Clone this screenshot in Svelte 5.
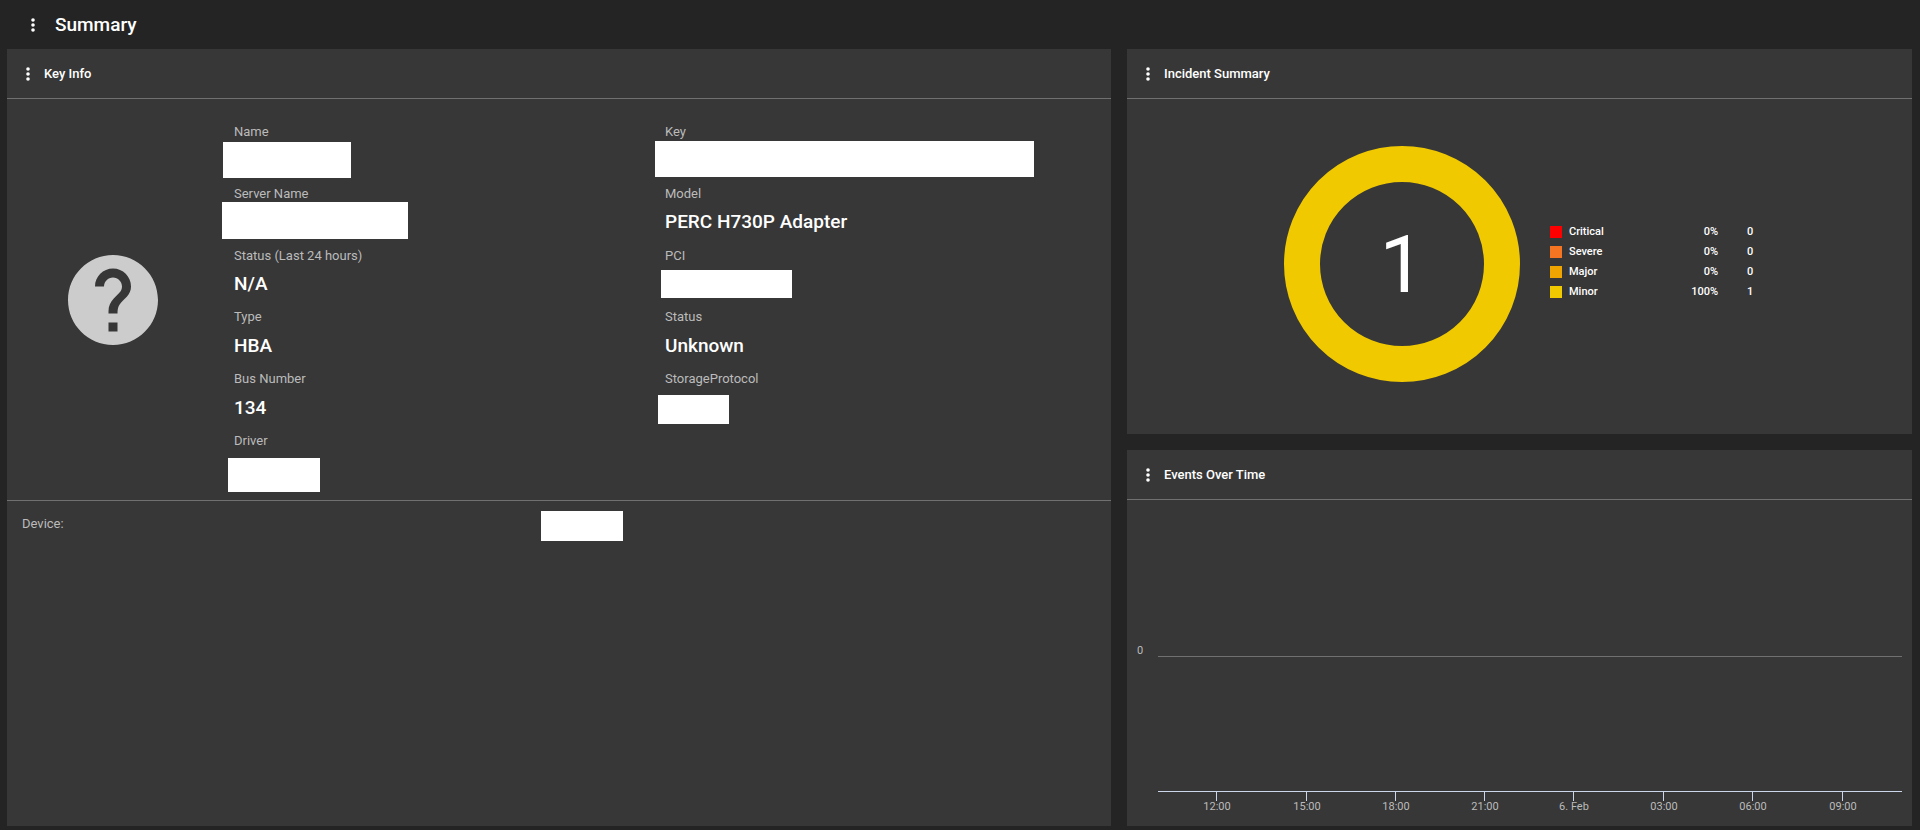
<script>
	// Left block of Key Info, offsets of the redaction boxes are relative to each field
	const leftFields = [
		{ label: 'Name', mask: { x: -11, y: 18, w: 128, h: 36 } },
		{ label: 'Server Name', mask: { x: -12, y: 16, w: 186, h: 37 } },
		{ label: 'Status (Last 24 hours)', value: 'N/A' },
		{ label: 'Type', value: 'HBA' },
		{ label: 'Bus Number', value: '134' },
		{ label: 'Driver', mask: { x: -6, y: 25, w: 92, h: 34 } }
	];

	const rightFields = [
		{ label: 'Key', mask: { x: -10, y: 17, w: 379, h: 36 } },
		{ label: 'Model', value: 'PERC H730P Adapter' },
		{ label: 'PCI', mask: { x: -4, y: 22, w: 131, h: 28 } },
		{ label: 'Status', value: 'Unknown' },
		{ label: 'StorageProtocol', mask: { x: -7, y: 24, w: 71, h: 29 } }
	];

	const severities = [
		{ name: 'Critical', color: '#ff0000', pct: '0%', count: 0 },
		{ name: 'Severe', color: '#f57523', pct: '0%', count: 0 },
		{ name: 'Major', color: '#f0a400', pct: '0%', count: 0 },
		{ name: 'Minor', color: '#f0c900', pct: '100%', count: 1 }
	];

	const ticks = [
		{ x: 89, label: '12:00' },
		{ x: 179, label: '15:00' },
		{ x: 268, label: '18:00' },
		{ x: 357, label: '21:00' },
		{ x: 446, label: '6. Feb' },
		{ x: 536, label: '03:00' },
		{ x: 625, label: '06:00' },
		{ x: 715, label: '09:00' }
	];
</script>

{#snippet dots()}
	<svg class="dots" width="6" height="14" viewBox="0 0 6 14" aria-hidden="true">
		<circle cx="3" cy="2" r="1.8" />
		<circle cx="3" cy="7" r="1.8" />
		<circle cx="3" cy="12" r="1.8" />
	</svg>
{/snippet}

{#snippet field(f)}
	<div class="field">
		<div class="label">{f.label}</div>
		{#if f.value}
			<div class="value">{f.value}</div>
		{:else}
			<div class="mask" style="left: {f.mask.x}px; top: {f.mask.y}px; width: {f.mask.w}px; height: {f.mask.h}px;"></div>
		{/if}
	</div>
{/snippet}

<div class="page">
	<header class="topbar">
		{@render dots()}
		<h1>Summary</h1>
	</header>

	<div class="grid">
		<section class="panel">
			<div class="panel-head">
				{@render dots()}
				<h2>Key Info</h2>
			</div>

			<div class="info">
				<div class="status-icon">
					<svg width="90" height="90" viewBox="2 2 20 20" aria-hidden="true">
						<path fill="#cccccc" d="M12 2C6.48 2 2 6.48 2 12s4.48 10 10 10 10-4.48 10-10S17.52 2 12 2zm1 17h-2v-2h2v2zm2.07-7.75l-.9.92C13.45 12.9 13 13.5 13 15h-2v-.5c0-1.1.45-2.1 1.17-2.83l1.24-1.26c.37-.36.59-.86.59-1.41 0-1.1-.9-2-2-2s-2 .9-2 2H8c0-2.21 1.79-4 4-4s4 1.79 4 4c0 .88-.36 1.68-.93 2.25z" />
					</svg>
				</div>
				<div class="column">
					{#each leftFields as f}
						{@render field(f)}
					{/each}
				</div>
				<div class="column">
					{#each rightFields as f}
						{@render field(f)}
					{/each}
				</div>
			</div>

			<div class="device">
				<span class="device-label">Device:</span>
				<div class="device-mask"></div>
			</div>
		</section>

		<div class="side">
			<section class="panel incidents">
				<div class="panel-head">
					{@render dots()}
					<h2>Incident Summary</h2>
				</div>
				<div class="incident-body">
					<svg class="donut" width="236" height="236" viewBox="0 0 236 236">
						<circle cx="118" cy="118" r="100" fill="none" stroke="#f0c900" stroke-width="36" />
						<text x="118" y="146" text-anchor="middle">1</text>
					</svg>
					<div class="legend">
						{#each severities as s}
							<span class="swatch" style="background: {s.color};"></span>
							<span class="sev-name">{s.name}</span>
							<span class="sev-pct">{s.pct}</span>
							<span class="sev-count">{s.count}</span>
						{/each}
					</div>
				</div>
			</section>

			<section class="panel events">
				<div class="panel-head">
					{@render dots()}
					<h2>Events Over Time</h2>
				</div>
				<svg class="chart" width="785" height="326" viewBox="0 0 785 326">
					<text class="y-label" x="10" y="154">0</text>
					<line x1="31" x2="775" y1="156.5" y2="156.5" stroke="#707070" />
					<line x1="31" x2="775" y1="291.5" y2="291.5" stroke="#ccd6eb" />
					{#each ticks as t}
						<line x1={t.x + 0.5} x2={t.x + 0.5} y1="292" y2="301" stroke="#ccd6eb" />
						<text class="x-label" x={t.x + 1} y="310" text-anchor="middle">{t.label}</text>
					{/each}
				</svg>
			</section>
		</div>
	</div>
</div>

<style>
	:global(body) {
		margin: 0;
		background: #242424;
	}

	.page {
		width: 1920px;
		height: 830px;
		overflow: hidden;
		display: flex;
		flex-direction: column;
		background: #242424;
		color: #fff;
		font-family: Roboto, "Liberation Sans", sans-serif;
	}

	.topbar {
		height: 49px;
		flex: none;
		display: flex;
		align-items: center;
		gap: 19px;
		padding-left: 30px;
		box-sizing: border-box;
	}

	.topbar h1 {
		margin: 0;
		font-size: 19px;
		font-weight: 500;
	}

	.dots {
		flex: none;
		fill: #fff;
	}

	.grid {
		flex: 1;
		display: grid;
		grid-template-columns: 1104px 785px;
		column-gap: 16px;
		padding: 0 8px 4px 7px;
		min-height: 0;
	}

	.panel {
		background: #373737;
		display: flex;
		flex-direction: column;
	}

	.panel-head {
		height: 50px;
		flex: none;
		box-sizing: border-box;
		display: flex;
		align-items: center;
		gap: 13px;
		padding-left: 18px;
		border-bottom: 1px solid #707070;
	}

	.panel-head h2 {
		margin: 0;
		font-size: 13px;
		font-weight: 500;
	}

	.info {
		height: 402px;
		flex: none;
		box-sizing: border-box;
		display: flex;
		border-bottom: 1px solid #707070;
	}

	.status-icon {
		width: 212px;
		flex: none;
		margin-right: 15px;
		display: flex;
		align-items: center;
		justify-content: center;
	}

	.column {
		width: 431px;
		flex: none;
		box-sizing: border-box;
		padding-top: 25px;
		display: flex;
		flex-direction: column;
		gap: 14.8px;
	}

	.field {
		position: relative;
		height: 47px;
	}

	.label {
		font-size: 13px;
		line-height: 16px;
		color: #bbbbbb;
	}

	.value {
		margin-top: 8.4px;
		font-size: 19px;
		line-height: 24px;
		font-weight: 500;
		color: #fff;
	}

	.mask {
		position: absolute;
		background: #fff;
	}

	.device {
		display: flex;
		align-items: flex-start;
		padding: 10px 15px;
	}

	.device-label {
		width: 519px;
		margin-top: 5px;
		font-size: 13px;
		line-height: 16px;
		color: #bbbbbb;
	}

	.device-mask {
		width: 82px;
		height: 30px;
		background: #fff;
	}

	.side {
		display: flex;
		flex-direction: column;
		gap: 16px;
		min-height: 0;
	}

	.incidents {
		height: 385px;
	}

	.events {
		flex: 1;
	}

	.incident-body {
		flex: 1;
		display: flex;
		align-items: center;
		padding: 0 0 5px 157px;
	}

	.donut {
		flex: none;
	}

	.donut text {
		font-size: 80px;
		font-weight: 400;
		fill: #fff;
	}

	.legend {
		margin: 0 0 5px 30px;
		display: grid;
		grid-template-columns: 12px 116px 40px auto;
		grid-auto-rows: 20px;
		align-items: center;
		font-size: 11px;
		font-weight: 500;
		color: #fff;
	}

	.swatch {
		width: 12px;
		height: 12px;
	}

	.sev-name {
		margin-left: 7px;
	}

	.sev-pct {
		text-align: right;
	}

	.sev-count {
		margin-left: 29px;
	}

	.chart {
		display: block;
	}

	.y-label,
	.x-label {
		font-size: 11px;
		fill: #bbbbbb;
	}
</style>
